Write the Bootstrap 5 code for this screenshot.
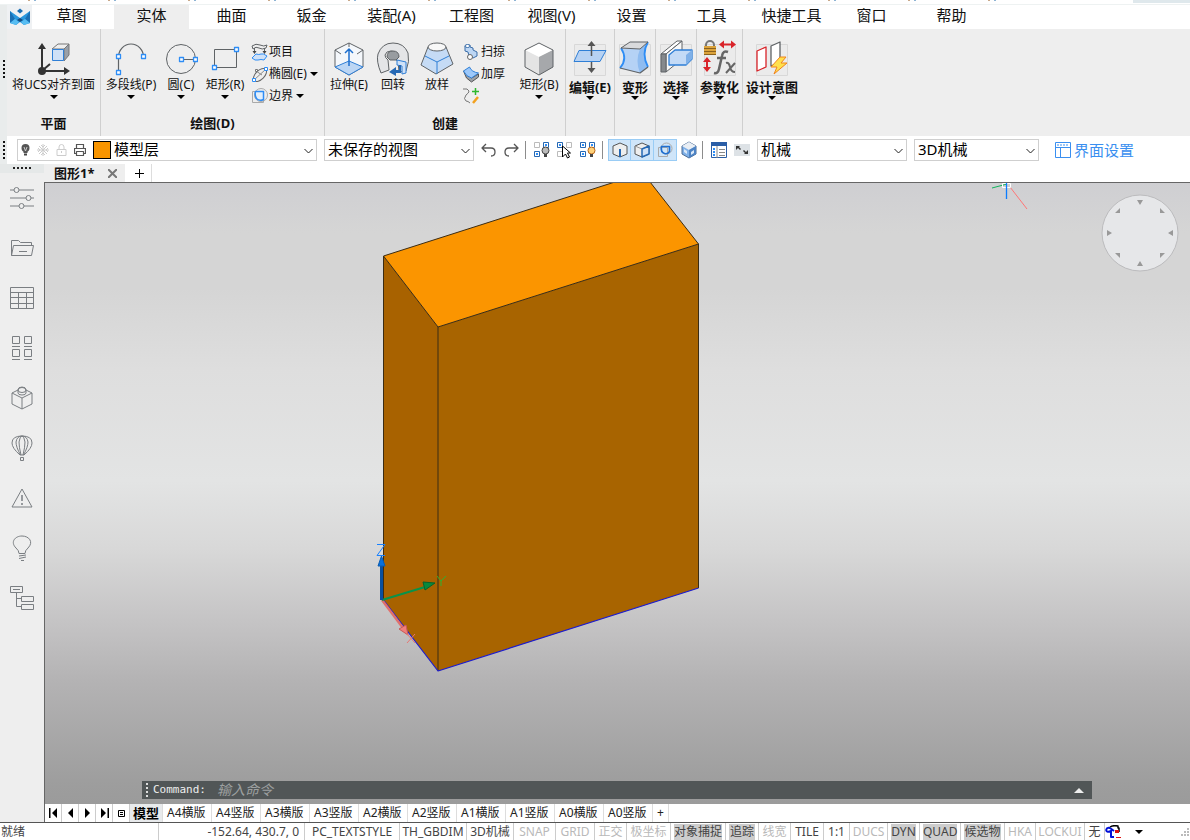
<!DOCTYPE html>
<html lang="zh-CN">
<head>
<meta charset="utf-8">
<meta name="viewport" content="width=device-width, initial-scale=1">
<title>图形1</title>
<link rel="stylesheet" href="https://cdn.jsdelivr.net/npm/bootstrap@5.3.0/dist/css/bootstrap.min.css">
<style>
:root{--ui:#eeeeee;--line:#cfcfcf;--ink:#111;--ico:#5f6366;--blue:#3a8ee6}
body{font-family:"Noto Sans","Noto Sans CJK SC",sans-serif;font-size:12px;line-height:16px;color:var(--ink);background:#fff;overflow:hidden}
button{color:inherit}
svg{display:block;flex:none;fill:none;stroke-linejoin:round}
.plain{border:0;background:none;padding:0}
.titlebits{height:5px;background:linear-gradient(#eef2f2,#eef2f2) 0 4px/100% 1px no-repeat,repeating-linear-gradient(90deg,#fff 0 28px,#c9a98a 28px 30px,#fff 30px 34px,#8fb4d4 34px 36px,#fff 36px 80px) 0 0/1000px 1px no-repeat,linear-gradient(#dfe8ec,#dfe8ec) 100% 0/57px 3px no-repeat,#fff}
.gripcol{width:7px;background:#e9ecec}
.dotsv{width:2px;height:18px;margin-left:3px;background:repeating-linear-gradient(#111 0 2px,transparent 2px 4px)}
.grip-ribbon{margin-top:55px}.grip-tools{margin-top:63px}
.ribbontabs{height:24px;background:#fff}
.ribbontabs .logo{width:25px;background:#eff1f3}
.ribbontabs .nav-link{width:80px;padding:0;text-align:center;font-size:15px;line-height:20px;color:var(--ink)}
.ribbontabs .nav-link span{display:block;margin:0 3px 0 2px;height:24px}
.ribbontabs .active span{background:var(--ui)}
.ribbon{height:107px;background:var(--ui)}
.grp{border-right:1px solid var(--line)}
.grp h2{font-size:13px;font-weight:700;line-height:26px;height:26px;margin:0;text-align:center}
.row-tools{display:flex;padding-left:2px}
.big{display:flex;flex-direction:column;align-items:center;padding-top:12px;white-space:nowrap;line-height:16px}
.tri{width:0;height:0;border:4px solid transparent;border-top-color:#000;border-bottom:0}
.big .tri{margin-top:2px}
.fold{display:flex;flex-direction:column;align-items:center;padding-top:11px;font-size:13px;font-weight:700;line-height:18px;white-space:nowrap}
.small-list{padding-top:12px}
.small-list button{display:flex;align-items:center;height:22px;gap:1px;white-space:nowrap}
.small-list .tri{margin-left:2px}
.g-plane{width:94px}.g-draw{width:224px}.g-make{width:241px}.g-edit{width:49px}.g-mid{width:41px}.g-par{width:46px}.g-int{width:58px;border:0}
.w44{width:44px}.w56{width:56px}.w58{width:58px}
.tools{height:28px;background:#fff;padding-left:10px}
.combo{height:22px;border:1px solid var(--line);background-color:#fff;font-size:15px;line-height:18px;color:#000;border-radius:0;padding:0 24px 2px 3px;background-position:right 3px center;background-size:9px 7px;background-image:url("data:image/svg+xml,%3csvg xmlns='http://www.w3.org/2000/svg' viewBox='0 0 9 7'%3e%3cpath fill='none' stroke='%23222' d='M.5 2l4 4 4-4'/%3e%3c/svg%3e")}
.combo-layer{width:300px;height:22px;border:1px solid var(--line);padding-left:3px;gap:7px}.combo-view{width:150px}.combo-ui{width:125px}
.inner{border:0;height:20px}
.swatch{width:18px;height:18px;flex:none;background:#f99500;border:1px solid #000}
.vr1{width:1px;height:18px;background:#8c8c8c}
.gapa{margin-left:7px}.gapb{margin-left:5px}
.tog{width:23px;height:22px;border:1px solid #99ccf5;background:#cfe5f9;display:flex;align-items:center;justify-content:center}
.tog+.tog{border-left:0}
.uiset{font-size:15px;color:#3a8ff0;text-decoration:none;gap:3px}
.side{width:44px;background:var(--ui)}
.side .top{height:9px;background:#e5e8e8}
.dotsh{width:19px;height:2px;margin:3px auto 0;background:repeating-linear-gradient(90deg,#222 0 2px,transparent 2px 4px)}
.side button{height:50px;width:44px;display:flex;align-items:center;justify-content:center}
.side svg{stroke:#7a7e82}
.doctabs{height:18px;background:#fff}
.doctab{width:81px;background:var(--ui);font-weight:700;font-size:13px;line-height:16px;padding-left:10px}
.newtab{width:27px;background:#fff;border-right:1px solid #ddd;padding-left:3px}
.view{border-left:1px solid #666;border-top:1px solid #666;background:linear-gradient(#cfcfd2 0,#d5d5d5 8%,#d5d5d5 17%,#dedede 30%,#e3e4e4 48%,#d8d8d8 59%,#c4c3c4 71%,#b4b3b4 80%,#9d9d9d 97%,#9b9b9b 100%)}
.wheel{position:absolute;top:11px;right:11px}
.cmd{position:absolute;left:97px;right:98px;bottom:5px;height:18px;background:#515657;color:#eee}
.cmd label{font:11px/18px "DejaVu Sans Mono",monospace;margin-left:5px;width:64px}
.cmd input{border:0;background:none;color:#eee;font-size:14px;line-height:18px;outline:0;padding:0}
.cmd input::placeholder{color:#9da0a0;font-style:italic;opacity:1}
.dotsc{width:2px;margin:2px 0 2px 4px;background:repeating-linear-gradient(#ddd 0 2px,transparent 2px 4px)}
.upt{width:0;height:0;border:5px solid transparent;border-bottom-color:#eee;border-top:0}
.sheets{height:18px;background:#fff;border-left:1px solid #666}
.sheets .step{width:17px;border-right:1px solid #ccc;display:flex;align-items:center;justify-content:center}
.sheets .sheet{width:49px;border-right:1px solid #ddd;white-space:nowrap;line-height:18px;color:#222;text-align:left;padding-left:4px}
.sheets .cur{width:33px;font-size:13px;font-weight:700;background:#e8eaec;color:#000;padding-left:3px}
.sheets .add{width:16px}
.status{height:18px;border-top:1px solid #555;background:#fff;color:#444}
.status>*{height:17px;line-height:17px;white-space:nowrap;border-right:1px solid #ccc;text-align:center;flex:none}
.status .off{color:#b9b9b9}
.status .on span{background:#cdcdcd;display:block;margin:1px 3px;line-height:15px;height:16px}
.s-ready{width:159px;padding-left:1px;text-align:left!important}
.s-pos{width:146px;padding-right:5px;text-align:right!important}
.s95{width:95px}.s67{width:67px}.s47{width:47px}.s42{width:42px}.s39{width:39px}.s32{width:32px}.s44{width:44px}.s55{width:55px}.s33{width:33px}.s26{width:26px}.s38{width:38px}.s41{width:41px}.s31{width:31px}.s49{width:49px}.s20{width:20px}
.shrinkable{min-width:0;min-height:0}
</style>
<script src="https://cdn.jsdelivr.net/npm/bootstrap@5.3.0/dist/js/bootstrap.bundle.min.js"></script>
</head>
<body class="d-flex flex-column vh-100">
<div class="titlebits flex-shrink-0"></div>
<header class="d-flex flex-shrink-0">
  <div class="gripcol flex-shrink-0 d-flex flex-column">
    <div class="dotsv grip-ribbon"></div>
    <div class="dotsv grip-tools"></div>
  </div>
  <div class="flex-fill">
    <nav class="ribbontabs nav flex-nowrap">
      <div class="logo d-flex align-items-center justify-content-center"><svg width="20" height="18" viewBox="0 0 20 18"><path fill="#2a97dd" d="M0 3l10 7 10-7v12l-6 2-4-3-4 3-6-2z"/><path fill="#1a6fb4" d="M0 3l5 8-5 4zM20 3l-5 8 5 4z"/><path fill="#57bdf2" d="M0 15l5-4 4 3-3 3zM20 15l-5-4-4 3 3 3z"/><path fill="#124f86" d="M10 10l3 2-3 2-3-2z"/><path fill="#1a6fb4" d="M7 3l3-2.500L13 3l-3 2.500z"/></svg></div>
      <a class="nav-link" href="#"><span>草图</span></a><a class="nav-link active" href="#"><span>实体</span></a><a class="nav-link" href="#"><span>曲面</span></a><a class="nav-link" href="#"><span>钣金</span></a><a class="nav-link" href="#"><span>装配(A)</span></a><a class="nav-link" href="#"><span>工程图</span></a><a class="nav-link" href="#"><span>视图(V)</span></a><a class="nav-link" href="#"><span>设置</span></a><a class="nav-link" href="#"><span>工具</span></a><a class="nav-link" href="#"><span>快捷工具</span></a><a class="nav-link" href="#"><span>窗口</span></a><a class="nav-link" href="#"><span>帮助</span></a>
    </nav>
    <div class="ribbon d-flex">
      <section class="grp g-plane d-flex flex-column justify-content-between">
        <button class="plain big"><svg width="34" height="36" viewBox="38 41 34 36"><path d="M43 71V48M43 71h24M44 70l7-6" stroke="#333" stroke-width="2"/><path d="M43 43l4 6h-8zM71 71l-6 4v-8z" fill="#333"/><circle cx="43" cy="71" r="4" fill="#333"/><path d="M53 49l6-5h11l-5 5z" fill="#eee" stroke="#777"/><path d="M65 49l5-5v11l-5 6z" fill="#9aa0a8" stroke="#777"/><path d="M53.500 49.500h11v11h-11z" fill="#cfe1f7" stroke="#2f7fd6"/></svg>将UCS对齐到面<i class="tri"></i></button>
        <h2>平面</h2>
      </section>
      <section class="grp g-draw d-flex flex-column justify-content-between">
        <div class="row-tools">
          <button class="plain big w56"><svg width="34" height="36" viewBox="115 41 34 36"><path d="M119.500 72V57a12.500 13 0 0 1 25 0" stroke="#5f6366" stroke-width="1.200"/><path fill="#fff" stroke="#2e8df5" stroke-width="1.300" d="M117.500 54.500h4v4h-4zM142.500 54.500h4v4h-4zM117.500 70.500h4v4h-4z"/></svg>多段线(P)<i class="tri"></i></button>
          <button class="plain big w44"><svg width="34" height="36" viewBox="165 41 34 36"><circle cx="182" cy="59" r="14.500" stroke="#5f6366"/><path d="M182 59.500h14" stroke="#5f6366"/><path fill="#fff" stroke="#2e8df5" stroke-width="1.300" d="M180.500 57.500h4v4h-4zM194.500 57.500h4v4h-4z"/></svg>圆(C)<i class="tri"></i></button>
          <button class="plain big w44"><svg width="34" height="36" viewBox="209 41 34 36"><path d="M215.500 49.500h22v18h-22z" stroke="#5f6366"/><path fill="#fff" stroke="#2e8df5" stroke-width="1.300" d="M235.500 47.500h4v4h-4zM213.500 65.500h4v4h-4z"/></svg>矩形(R)<i class="tri"></i></button>
          <div class="small-list ps-1">
            <button class="plain"><svg width="17" height="18" viewBox="252 43 17 18"><path d="M253 46q4-3 8-1t7 0l-1 3q-4 2-7 0t-6 1z" stroke="#5f6366"/><path d="M255.500 48v4M265.500 48v4" stroke="#5f6366"/><path d="M253.500 51h4l-2 3zM263.500 51h4l-2 3z" fill="#444"/><path d="M253 58l4-4q3 1 5 0t6 2l-3 4q-3-1-6 0t-6-2z" fill="#cfe1f7" stroke="#2e8df5"/></svg>项目</button>
            <button class="plain"><svg width="17" height="18" viewBox="252 65 17 18"><ellipse cx="261" cy="75" rx="8" ry="4.500" transform="rotate(-45 261 75)" stroke="#666"/><path d="M255 80l12-11M257 71l6 4" stroke="#888"/><path fill="#fff" stroke="#2e8df5" d="M253.500 78.500h3v3h-3zM265.500 67.500h3v3h-3z"/><path fill="#fff" stroke="#777" d="M256.500 69.500h2v2h-2z"/></svg>椭圆(E)<i class="tri"></i></button>
            <button class="plain"><svg width="17" height="18" viewBox="252 87 17 18"><circle cx="262" cy="95" r="6.500" stroke="#aaa"/><path d="M253.500 91.500h11v11h-11z" stroke="#aaa"/><path d="M256.500 91.500h8v8q-4 2-7-1-2-3-1-7z" stroke="#2e8df5" stroke-width="1.500" fill="#e2effc"/></svg>边界<i class="tri"></i></button>
          </div>
        </div>
        <h2>绘图(D)</h2>
      </section>
      <section class="grp g-make d-flex flex-column justify-content-between">
        <div class="row-tools">
          <button class="plain big w44"><svg width="32" height="36" viewBox="334 41 32 36"><path d="M350 43l14 7v17l-14 8-14-8V50z" fill="#f4f7fb" stroke="#5f6366"/><path d="M336 67l14-6 14 6-14 8z" fill="#bcd6f4" stroke="#2f7fd6"/><path d="M336 50l6 4M364 50l-6 4M350 43v4" stroke="#5f6366"/><path d="M350 66V50M346 53l4-4 4 4" stroke="#1d6fce" stroke-width="1.500"/></svg>拉伸(E)</button>
          <button class="plain big w44"><svg width="34" height="36" viewBox="377 41 34 36"><path d="M382 73q-5-12-3-19 4-11 15-11t15 10q2 8-2 18l-7 1-1-11-2-1q3-3 1-6-2-3-6-3-5 0-6 4 0 3 3 5l1 10z" fill="#e4e5e7" stroke="#5f6366"/><path d="M388 57q0-6 6-6t6 6l-3 3h-6z" fill="#989ca0" stroke="#5f6366"/><path d="M398 60l9 2v11l-4 1v-8l-5-1z" fill="#cfe1f7" stroke="#2f7fd6"/><path d="M400 65h2v8h-5v3l-7-4 7-5v3h3z" fill="#2568b4"/></svg>回转</button>
          <button class="plain big w44"><svg width="34" height="36" viewBox="421 41 34 36"><path d="M429 47l-7 18 15 9 17-10-7-17z" fill="#c5dbf5" stroke="#5f6366"/><path d="M426 56l12 6 12-6M438 62v12" stroke="#2f7fd6"/><ellipse cx="438" cy="47" rx="9" ry="4" fill="#f8f8f8" stroke="#5f6366"/></svg>放样</button>
          <div class="small-list ps-1 w58">
            <button class="plain"><svg width="17" height="18" viewBox="464 43 17 18"><path d="M466 46v5l3 1 1 4 4 2 4-2v-4l-4-2v-2l-3-1v-2z" fill="#bcd6f4" stroke="#3a6da8"/><circle cx="471" cy="57" r="2.500" stroke="#666" fill="#fff"/><ellipse cx="468.500" cy="46" rx="2.500" ry="1.500" stroke="#3a6da8" fill="#fff"/></svg>扫掠</button>
            <button class="plain"><svg width="17" height="18" viewBox="464 65 17 18"><path d="M464.500 71l3 7 5 4 7-5v-3l-7 4z" fill="#9ba1a8" stroke="#555"/><path d="M464.500 71l6-4q2 5 9 6l-7 5q-5-1-8-7z" fill="#9cc8fa" stroke="#2f7fd6"/></svg>加厚</button>
            <button class="plain" aria-label="曲线"><svg width="17" height="18" viewBox="464 87 17 18"><path d="M464 89q5-1 6 2 0 2-3 4-3 4 0 6 2 0 4 2" stroke="#777"/><path d="M476.500 88v7M473 91.500h7" stroke="#2eb82e" stroke-width="1.500"/><path d="M474 103l5-6" stroke="#f2a11f" stroke-width="2.500"/></svg></button>
          </div>
          <button class="plain big w44"><svg width="32" height="36" viewBox="524 41 32 36"><path d="M540 43l14 7v17l-14 8-14-8V50z" fill="#e4e4e4"/><path d="M526 50l14-7 14 7-14 7z" fill="#fff"/><path d="M554 50v17l-14 8V57z" fill="#a6a8ab"/><path d="M540 43l14 7v17l-14 8-14-8V50z" stroke="#5f6366"/></svg>矩形(B)<i class="tri"></i></button>
        </div>
        <h2>创建</h2>
      </section>
      <section class="grp g-edit"><button class="plain fold w-100"><svg width="34" height="38" viewBox="573 40 34 38"><path d="M574.500 44.500h31v31h-31z" fill="#ebebeb" stroke="#d8d8d8"/><path d="M579 50.500h27l-6 11h-26z" fill="#b7d2f3" stroke="#2f7fd6"/><path d="M591.500 45v11M591.500 62v7" stroke="#555" stroke-width="1.500"/><path d="M591.500 41l4 5h-8zM591.500 73l4-5h-8z" fill="#555"/></svg>编辑(E)<i class="tri"></i></button></section>
      <section class="grp g-mid"><button class="plain fold w-100"><svg width="34" height="38" viewBox="618 40 34 38"><path d="M619.500 44.500h31v31h-31z" fill="#ebebeb" stroke="#d8d8d8"/><path d="M621 48l19 1 8-7q-7 12 0 25l-8 6-20-5q8-9 1-20z" fill="#b5d2f5"/><path d="M640 49l8-7q-7 12 0 25l-8 6q-5-12 0-24z" fill="#8fbcf0"/><path d="M621 48q7 11-1 20M648 42q-7 12 0 25" stroke="#2e8df5" stroke-width="1.800"/><path d="M620 68l20 5 8-6" stroke="#5f6366" stroke-width="1.200"/><path d="M621 48l9-6h18l-8 7z" fill="#d9dadc" stroke="#5f6366"/></svg>变形<i class="tri"></i></button></section>
      <section class="grp g-mid"><button class="plain fold w-100"><svg width="34" height="38" viewBox="659 40 34 38"><path d="M660.500 44.500h31v31h-31z" fill="#ebebeb" stroke="#d8d8d8"/><path d="M661 54l16-13h5l-16 13z" fill="#fff" stroke="#5f6366"/><path d="M666 54l16-13v18l-16 13z" fill="#f9f9f9" stroke="#5f6366"/><path d="M661 54h5v18h-5z" fill="#85898d" stroke="#5f6366"/><path d="M669 55l6-5h17v9l-6 6h-17z" fill="#c3daf6" stroke="#2f7fd6" stroke-width="1.300"/><path d="M686 55l6-5v9l-6 6z" fill="#7fb0e8"/></svg>选择<i class="tri"></i></button></section>
      <section class="grp g-par"><button class="plain fold w-100"><svg width="34" height="38" viewBox="702 40 34 38"><path d="M703.500 44.500h31v31h-31z" fill="#ebebeb" stroke="#d8d8d8"/><path d="M705 47v-2a4 4 0 0 1 8 0v2" stroke="#777" stroke-width="2"/><path d="M703 46h12v9h-12z" fill="#dba33c"/><path d="M703 48.500h12M703 51.500h12M703 54.500h12" stroke="#8b611c"/><path d="M721 44.500h11M706 60v9" stroke="#d9242a" stroke-width="2"/><path d="M718 44.500l5-4v8zM735 44.500l-5-4v8zM706 57l4 5h-8zM706 72l4-5h-8z" fill="#d9242a"/><path d="M727 52q-5-2-6 4l-3 13q-1 5-5 4M716 58h9" stroke="#666" stroke-width="2.500"/><path d="M725 63q3-1 4 4t5 5M734 63l-9 10" stroke="#666" stroke-width="2"/></svg>参数化<i class="tri"></i></button></section>
      <section class="grp g-int"><button class="plain fold w-100"><svg width="34" height="38" viewBox="755 40 34 38"><path d="M756.500 44.500h31v31h-31z" fill="#ebebeb" stroke="#d8d8d8"/><path d="M757 51l9-4v20l-9 4z" fill="#fff" stroke="#d9242a" stroke-width="1.300"/><path d="M771 46l9-4v20l-9 4z" fill="#fff" stroke="#5f6366" stroke-width="1.300"/><path d="M780 57l-9 10h6l-3 7 13-11h-6l5-6z" fill="#ffe14d" stroke="#f0841c"/></svg>设计意图<i class="tri"></i></button></section>
    </div>
    <div class="tools d-flex align-items-center">
      <div class="combo-layer d-flex align-items-center">
        <button class="plain" aria-label="开"><svg width="9" height="12" viewBox="0 0 9 12"><circle cx="4.500" cy="4" r="4" fill="#555"/><path d="M2.500 7h4v2h-4z" fill="#555"/><path d="M3 10.500h3" stroke="#444" stroke-width="2"/><path d="M3 3l1.500 4L6 3" stroke="#ccc"/></svg></button>
        <button class="plain" aria-label="冻结"><svg width="12" height="12" viewBox="0 0 12 12"><path d="M0 6h12M2 2l8 8M10 2l-8 8M6 0v12M4 1l2 2 2-2M4 11l2-2 2 2M1 4l2 2-2 2M11 4L9 6l2 2" stroke="#ccc"/></svg></button>
        <button class="plain" aria-label="锁定"><svg width="11" height="12" viewBox="0 0 11 12"><path d="M1 5.500h9v6H1zM3 5V3a2.500 2.500 0 0 1 5 0v2M5.500 7v2" stroke="#ccc"/></svg></button>
        <button class="plain" aria-label="打印"><svg width="12" height="12" viewBox="0 0 12 12"><path d="M2.500 4V.500h7V4M2.500 9.500h-2v-5h11v5h-2M2.500 7.500h7v4h-7z" stroke="#555" stroke-width="1.200"/></svg></button>
        <div class="d-flex align-items-center flex-fill"><span class="swatch"></span><select class="form-select combo inner" aria-label="图层"><option>模型层</option></select></div>
      </div>
      <select class="form-select combo combo-view gapa" aria-label="视图"><option>未保存的视图</option></select>
      <button class="plain gapa" aria-label="撤销"><svg width="16" height="16" viewBox="0 0 16 16"><path d="M5 2L1 6l4 4M1 6h9q4 0 4 4t-4 4" stroke="#555" stroke-width="1.300"/></svg></button>
      <button class="plain gapa" aria-label="重做"><svg width="16" height="16" viewBox="0 0 16 16"><path d="M10 2l4 4-4 4M14 6H5Q1 6 1 10t4 4" stroke="#555" stroke-width="1.300"/></svg></button>
      <span class="vr1 gapb"></span>
      <button class="plain gapa" aria-label="隐藏"><svg width="18" height="18" viewBox="0 0 18 18"><path d="M1.500 1.500h5v5h-5z" stroke="#bbb"/><path d="M10.500 1.500h5v5h-5zM1.500 10.500h5v5h-5z" stroke="#2568b4"/><path d="M3 12h2v2H3zM12 3h2v2h-2z" fill="#2e8df5"/><circle cx="12.500" cy="9.500" r="3.500" fill="#bbb" stroke="#444"/><path d="M11 13h3v3h-3z" fill="#444"/></svg></button>
      <button class="plain gapb" aria-label="选择对象"><svg width="18" height="18" viewBox="0 0 18 18"><path d="M10.500 1.500h5v5h-5zM1.500 10.500h5v5h-5z" stroke="#bbb"/><path d="M1.500 1.500h5v5h-5z" stroke="#2568b4"/><path d="M3 3h2v2H3z" fill="#2e8df5"/><path d="M6.500 5v11l3-3 2 4 2-1-2-4h3z" fill="#fff" stroke="#000"/></svg></button>
      <button class="plain gapb" aria-label="显示"><svg width="18" height="18" viewBox="0 0 18 18"><path d="M1.500 1.500h5v5h-5zM10.500 1.500h5v5h-5zM1.500 10.500h5v5h-5z" stroke="#2568b4"/><path d="M3 3h2v2H3zM3 12h2v2H3zM12 3h2v2h-2z" fill="#2e8df5"/><circle cx="12.500" cy="9.500" r="3.500" fill="#ffd27a" stroke="#b8651b"/><path d="M11 13h3v3h-3z" fill="#444"/></svg></button>
      <span class="vr1 gapb"></span>
      <button class="tog p-0 gapb" aria-label="边"><svg width="16" height="16" viewBox="0 0 16 16"><path d="M8 1l7 3v8l-7 3-7-3V4z" fill="#eee" stroke="#555"/><path d="M8 7v8" stroke="#2568b4" stroke-width="2"/></svg></button><button class="tog p-0" aria-label="面"><svg width="16" height="16" viewBox="0 0 16 16"><path d="M8 1l7 3v8l-7 3-7-3V4z" fill="#eee" stroke="#555"/><path d="M1 4l7 3 7-3" stroke="#999"/><path d="M8 7l7-3v8l-7 3z" fill="#cfe1f7" stroke="#2568b4" stroke-width="1.500"/></svg></button><button class="tog p-0" aria-label="边界"><svg width="16" height="16" viewBox="0 0 16 16"><circle cx="9.500" cy="6.500" r="5.500" stroke="#aaa"/><path d="M1.500 5.500h9v9h-9z" stroke="#aaa"/><path d="M4.500 4.500h8v5q-2 3-5 2-4-1-3-7z" stroke="#1f6fd0" stroke-width="1.700"/></svg></button>
      <button class="plain ms-1" aria-label="实体"><svg width="16" height="18" viewBox="0 0 16 18"><path d="M8 1l7 4v8l-7 4-7-4V5z" fill="#7fb0e8" stroke="#4a6b94"/><path d="M8 1l7 4-7 4-7-4z" fill="#e9eef4"/><path d="M8 9v8l7-4V5z" fill="#4d83c4"/><path d="M3 8l3 2v3l-3-2zM10 11l3-2v3l-3 2z" fill="#dbe9f8"/></svg></button>
      <span class="vr1 gapb"></span>
      <button class="plain ms-2" aria-label="属性"><svg width="16" height="16" viewBox="0 0 16 16"><path d="M.500 .500h15v15H.500z" fill="#fff" stroke="#2b5ea6"/><path d="M0 0h16v4H0z" fill="#2b5ea6"/><path d="M2 6h2v2H2zM2 9h2v2H2zM2 12h2v2H2z" fill="#2e8df5"/><path d="M6 4v12M8 7.500h6M8 10.500h6M8 13.500h6" stroke="#888"/></svg></button>
      <button class="plain gapa" aria-label="全屏"><svg width="16" height="12" viewBox="0 0 16 12"><path d="M0 0h16v12H0z" fill="#dde2e6"/><path d="M2 2h4L5 3l2 2-1 1-2-2-2 2zM14 10h-4l1-1-2-2 1-1 2 2 2-2z" fill="#333"/></svg></button>
      <select class="form-select combo combo-view gapa" aria-label="工作空间"><option>机械</option></select>
      <select class="form-select combo combo-ui gapa" aria-label="界面"><option>3D机械</option></select>
      <a class="uiset d-flex align-items-center ms-3" href="#"><svg width="16" height="16" viewBox="0 0 16 16"><path d="M.500 .500h15v15H.500zM.500 5.500h15M5.500 5.500v10M2 3h2M5 3h2M8 3h2M11 3h2" stroke="#3a8ff0"/></svg>界面设置</a>
    </div>
  </div>
</header>
<main class="d-flex flex-fill shrinkable">
  <aside class="side flex-shrink-0">
    <div class="top d-flex"><div class="dotsh"></div></div>
    <button class="plain" aria-label="设置"><svg width="24" height="22" viewBox="0 0 24 22"><path d="M0 3h4M9 3h15M0 11h16M21 11h3M0 19h9M14 19h10"/><circle cx="6.500" cy="3" r="2.500"/><circle cx="18.500" cy="11" r="2.500"/><circle cx="11.500" cy="19" r="2.500"/></svg></button>
    <button class="plain" aria-label="文件"><svg width="24" height="20" viewBox="0 0 24 20"><path d="M1.500 17.500v-15h7l2 2h11v3M1.500 17.500h20l2-10h-20zM9 13.500h8"/></svg></button>
    <button class="plain" aria-label="表格"><svg width="24" height="22" viewBox="0 0 24 22"><path d="M.500 .500h23v21H.500zM.500 5.500h23M.500 10.500h23M.500 16.500h23M8.500 5.500v16M16.500 5.500v16"/></svg></button>
    <button class="plain" aria-label="库"><svg width="22" height="24" viewBox="0 0 22 24"><path d="M1.500 .500h7v7h-7zM13.500 .500h7v7h-7zM1.500 13.500h7v7h-7zM13.500 13.500h7v7h-7zM1 10.500h8M13 10.500h8M1 23.500h8M13 23.500h8"/></svg></button>
    <button class="plain" aria-label="零件"><svg width="22" height="24" viewBox="0 0 22 24"><path d="M11 2l10 5v11l-10 5-10-5V7zM1 7l10 5 10-5M11 12v11"/><path d="M7 4a4 3 0 0 1 8 0v3a4 2 0 0 1-8 0z" fill="#eee"/><ellipse cx="11" cy="4" rx="4" ry="2.500"/></svg></button>
    <button class="plain" aria-label="渲染"><svg width="22" height="26" viewBox="0 0 22 26"><path d="M9 20Q1 13 1 8q0-7 10-7t10 7q0 5-8 12zM9.500 20Q5 12 5 7q1-6 6-6t6 6q0 5-4.500 13M10 20Q8 12 8 7q1-6 3-6t3 6q0 5-2 13M9.500 22.500h3v3h-3z"/></svg></button>
    <button class="plain" aria-label="警告"><svg width="22" height="20" viewBox="0 0 22 20"><path d="M11 1l10 18H1z"/><path d="M11 7v6M11 15v2" stroke-width="1.500"/></svg></button>
    <button class="plain" aria-label="提示"><svg width="20" height="26" viewBox="0 0 20 26"><path d="M7 18.500q0-3-3-5.500C-2 7 3 1 10 1s12 6 6 12q-3 2.500-3 5.500zM7 21l7-1M7 23.500l7-1.500M9 25.500h3"/></svg></button>
    <button class="plain" aria-label="结构"><svg width="24" height="24" viewBox="0 0 24 24"><path d="M.500 .500h12v6H.500zM3 3.500h7M6.500 6.500v14h5M6.500 12.500h5M11.500 10.500h12v5h-12zM11.500 18.500h12v5h-12z"/></svg></button>
  </aside>
  <div class="flex-fill d-flex flex-column shrinkable">
    <div class="doctabs d-flex flex-shrink-0">
      <div class="doctab d-flex align-items-center justify-content-between">图形1*<button class="plain pe-2" aria-label="关闭"><svg width="9" height="9" viewBox="0 0 9 9"><path d="M0 0l9 9M9 0L0 9" stroke="#777" stroke-width="2"/></svg></button></div>
      <button class="plain newtab d-flex align-items-center justify-content-center" aria-label="新建"><svg width="9" height="9" viewBox="0 0 9 9"><path d="M4.500 0v9M0 4.500h9" stroke="#000"/></svg></button>
    </div>
    <div class="view position-relative flex-fill shrinkable">
      <svg class="w-100 h-100 overflow-hidden" viewBox="45 183 1145 621" preserveAspectRatio="xMinYMin meet">
        <path d="M383.500 256L643 173l55.500 71L438 327z" fill="#fb9500"/>
        <path d="M383.500 256L438 327v344l-54.500-71z" fill="#a86200"/>
        <path d="M438 327l260.500-83v344L438 671z" fill="#a86400"/>
        <path d="M383.500 600V256L643 173l55.500 71v344M383.500 256L438 327l260.500-83M438 327v344" stroke="#3b2c14"/>
        <path d="M383.500 600L438 671l260.500-83" stroke="#1b1bd0" stroke-width="1.200"/>
        <path d="M382 600l21 28" stroke="#e0706c" stroke-width="2.500"/><path d="M399 629l7-4 2 10z" fill="#f07f7c" stroke="#c85a56"/>
        <path d="M407 634l8 9M415 634l-8 9" stroke="#e77773"/>
        <path d="M382 600l43-13" stroke="#08934a" stroke-width="2"/><path d="M423 582l12 1-10 7z" fill="#078a3c" stroke="#06632c"/>
        <path d="M437 576l4 5 5-5M441 581v5" stroke="#30b030"/>
        <path d="M381.500 600v-34" stroke="#0a4f9e" stroke-width="3"/><path d="M381.500 556l3.500 10h-7z" fill="#0870dc" stroke="#0a5bb0"/>
        <path d="M377 544.500h8l-8 11h8" stroke="#1982ff"/>
        <path d="M1007 184l-15 4" stroke="#11b55c"/><path d="M1010 187l17 22" stroke="#ff7676"/><path d="M1002.500 183.500h8v4h-8z" stroke="#fff"/><path d="M1006.500 183v16" stroke="#0b7cff" stroke-width="1.300"/>
      </svg>
      <svg class="wheel" width="78" height="78" viewBox="0 0 78 78"><circle cx="39" cy="39" r="38" fill="#e6e7e9" stroke="#bcbcbe"/><path fill="#999" d="M36 6h6l-3 5zM36 72h6l-3-5zM6 36v6l5-3zM72 36v6l-5-3zM19 14v5h-5zM59 14v5h5zM19 64v-5h-5zM59 64v-5h5z"/></svg>
      <div class="cmd d-flex align-items-center">
        <i class="dotsc align-self-stretch"></i><label for="cmd">Command:</label><input id="cmd" class="flex-fill" type="text" placeholder="输入命令"><i class="upt me-2"></i>
      </div>
    </div>
    <div class="sheets d-flex flex-shrink-0">
      <button class="plain step" aria-label="首页"><svg width="9" height="10" viewBox="0 0 9 10"><path d="M0 0h1.500v10H0zM8 0v10L3 5z" fill="#000"/></svg></button><button class="plain step" aria-label="上一页"><svg width="9" height="10" viewBox="0 0 9 10"><path d="M7 0v10L2 5z" fill="#000"/></svg></button><button class="plain step" aria-label="下一页"><svg width="9" height="10" viewBox="0 0 9 10"><path d="M2 0v10l5-5z" fill="#000"/></svg></button><button class="plain step" aria-label="末页"><svg width="9" height="10" viewBox="0 0 9 10"><path d="M7.500 0H9v10H7.500zM1 0v10l5-5z" fill="#000"/></svg></button><button class="plain step" aria-label="列表"><svg width="7" height="7" viewBox="0 0 7 7"><path d="M.500 .500h6v6h-6zM2 2.500h3M2 4.500h3" stroke="#000"/></svg></button>
      <button class="plain sheet cur">模型</button><button class="plain sheet">A4横版</button><button class="plain sheet">A4竖版</button><button class="plain sheet">A3横版</button><button class="plain sheet">A3竖版</button><button class="plain sheet">A2横版</button><button class="plain sheet">A2竖版</button><button class="plain sheet">A1横版</button><button class="plain sheet">A1竖版</button><button class="plain sheet">A0横版</button><button class="plain sheet">A0竖版</button><button class="plain sheet add">+</button>
    </div>
  </div>
</main>
<footer class="status d-flex flex-shrink-0">
  <div class="s-ready">就绪</div><div class="s-pos">-152.64, 430.7, 0</div>
  <div class="s95">PC_TEXTSTYLE</div><div class="s67">TH_GBDIM</div><div class="s47">3D机械</div><div class="s42 off">SNAP</div><div class="s39 off">GRID</div><div class="s32 off">正交</div><div class="s44 off">极坐标</div><div class="s55 on"><span>对象捕捉</span></div><div class="s33 on"><span>追踪</span></div><div class="s32 off">线宽</div><div class="s33">TILE</div><div class="s26">1:1</div><div class="s38 off">DUCS</div><div class="s32 on"><span>DYN</span></div><div class="s41 on"><span>QUAD</span></div><div class="s44 on"><span>候选物</span></div><div class="s31 off">HKA</div><div class="s49 off">LOCKUI</div><div class="s20">无</div>
  <div class="border-0 d-flex align-items-center gap-2 flex-fill"><svg width="18" height="14" viewBox="0 0 18 14"><path d="M1 5q1-3 4-2M1 5q1 3 5 1v6h3M5 3l4 3" stroke="#0010d8" stroke-width="2"/><path d="M5 2q3-2 8-1v2h1v4" stroke="#000" stroke-width="1.500"/><path d="M10 5h4v3h-4zM11 12h5v1h-5z" fill="#e01010"/></svg><i class="tri ms-1"></i><svg class="ms-auto" width="10" height="10" viewBox="0 0 10 10"><path d="M7 1h2v2H7zM4 4h2v2H4zM7 4h2v2H7zM1 7h2v2H1zM4 7h2v2H4zM7 7h2v2H7z" fill="#bbb"/></svg></div>
</footer>
</body>
</html>
